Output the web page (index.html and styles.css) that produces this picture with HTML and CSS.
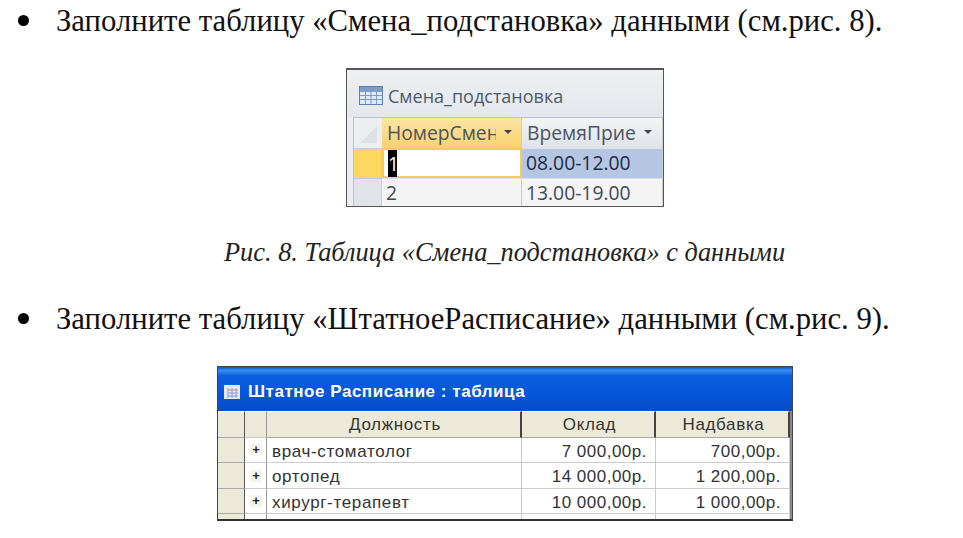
FILE: index.html
```html
<!DOCTYPE html>
<html lang="ru">
<head>
<meta charset="utf-8">
<title>Заполните таблицу</title>
<link rel="stylesheet" href="styles.css">
</head>
<body>
<main class="page">
  <div class="bullet-line bullet-first"><span class="dot"></span><p class="bullet-text">Заполните таблицу «Смена_подстановка» данными (см.рис. 8).</p></div>

  <figure class="shot-a">
    <div class="a-title">
      <svg class="a-icon" width="24" height="19" viewBox="0 0 24 19"><rect x="0.5" y="0.5" width="23" height="18" fill="#dfe8f5" stroke="#5f7ea8"/><rect x="1" y="1" width="22" height="4" fill="#7d9cc8"/><path d="M1 5.5H23M1 9.5H23M1 13.5H23M6.5 1V18M12 1V18M17.5 1V18" stroke="#7d9cc8" fill="none"/></svg>
      <span class="a-title-text">Смена_подстановка</span>
    </div>
    <div class="a-grid">
      <div class="a-corner"><svg width="26" height="28" viewBox="0 0 26 28"><path d="M6 25L23 8V25Z" fill="#dde1e6"/></svg></div>
      <div class="a-head a-head-active"><span class="a-head-label">НомерСмен</span><span class="a-caret"></span></div>
      <div class="a-head"><span class="a-head-label">ВремяПрие</span><span class="a-caret"></span></div>

      <div class="a-sel a-sel-active"></div>
      <div class="a-cell a-cell-edit"><span class="a-selected">1</span></div>
      <div class="a-cell a-cell-current">08.00-12.00</div>

      <div class="a-sel"></div>
      <div class="a-cell">2</div>
      <div class="a-cell">13.00-19.00</div>
    </div>
  </figure>

  <p class="caption">Рис. 8. Таблица «Смена_подстановка» с данными</p>

  <div class="bullet-line bullet-second"><span class="dot"></span><p class="bullet-text">Заполните таблицу «ШтатноеРасписание» данными (см.рис. 9).</p></div>

  <figure class="shot-b">
    <div class="b-title">
      <svg class="b-icon" width="16" height="14" viewBox="0 0 16 14"><rect width="16" height="14" fill="#e6e9f6"/><path d="M4 5H14M4 8H14M4 11H14M4 3V13M8 3V13M12 3V13" stroke="#8b9bd0" fill="none"/></svg>
      <span class="b-title-text">Штатное Расписание : таблица</span>
    </div>
    <div class="b-grid">
      <div class="b-sel b-hd"></div><div class="b-exp b-hd"></div><div class="b-hd b-center">Должность</div><div class="b-hd b-center">Оклад</div><div class="b-hd b-center">Надбавка</div>

      <div class="b-sel"></div><div class="b-exp"><span class="b-plus">+</span></div><div class="b-cell">врач-стоматолог</div><div class="b-cell b-num">7 000,00р.</div><div class="b-cell b-num">700,00р.</div>

      <div class="b-sel"></div><div class="b-exp"><span class="b-plus">+</span></div><div class="b-cell">ортопед</div><div class="b-cell b-num">14 000,00р.</div><div class="b-cell b-num">1 200,00р.</div>

      <div class="b-sel"></div><div class="b-exp"><span class="b-plus">+</span></div><div class="b-cell">хирург-терапевт</div><div class="b-cell b-num">10 000,00р.</div><div class="b-cell b-num">1 000,00р.</div>

      <div class="b-sel b-tail"></div><div class="b-exp b-tail"></div><div class="b-cell b-tail"></div><div class="b-cell b-tail"></div><div class="b-cell b-tail"></div>
    </div>
  </figure>
</main>
</body>
</html>
```

FILE: styles.css
```css
* { box-sizing: border-box; }
html, body { margin: 0; padding: 0; background: #fff; }
body { width: 963px; height: 538px; overflow: hidden; }
.page { display: flex; flex-direction: column; align-items: flex-start; }
figure { margin: 0; }
p { margin: 0; }

.bullet-line { display: flex; align-items: center; height: 46px; padding-left: 18px; }
.bullet-first { height: 42px; }
.bullet-second { margin-top: 27px; }
.dot { width: 11px; height: 11px; border-radius: 50%; background: #000; margin-right: 27px; margin-top: -1px; flex: none; }
.bullet-text { font: 30.7px/46px "Liberation Serif", serif; color: #111; white-space: nowrap; }

.shot-a {
  margin: 26px 0 0 346px; width: 318px; height: 139px;
  border: 1px solid #555; border-top-width: 2px; background: #e9edf1;
  font-family: "Open Sans", sans-serif; overflow: hidden;
  display: flex; flex-direction: column;
}
.a-title { height: 47px; display: flex; align-items: center; gap: 5px; padding: 4px 0 0 12px; background: linear-gradient(#eef0f3, #e3e7eb); flex: none; border-top-left-radius: 5px; }
.a-title-text { font-size: 18px; color: #4d5a68; }
.a-grid { display: grid; grid-template-columns: 28px 140px 1fr; grid-template-rows: 30px 30px 1fr; flex: 1; margin-left: 6px; border-top: 1px solid #b9c2cd; border-left: 1px solid #b9c2cd; }
.a-corner { background: #eceff2; }
.a-corner svg { display: block; }
.a-head { display: flex; align-items: center; padding: 0 0 2px 5px; background: linear-gradient(#f2f4f6, #dfe3e8); border-right: 1px solid #c5ccd5; font-size: 19.3px; color: #4a5563; overflow: hidden; }
.a-head-active { background: linear-gradient(#fbe4a4, #f8d26e); }
.a-head-label { white-space: nowrap; overflow: hidden; width: 109px; flex: none; }
.a-caret { width: 0; height: 0; margin-left: 8px; border-left: 4px solid transparent; border-right: 4px solid transparent; border-top: 4px solid #3d4650; flex: none; }
.a-sel { background: #e0e4e9; border-right: 1px solid #c5ccd5; border-top: 1px solid #c5ccd5; }
.a-sel-active { background: #fdd75f; }
.a-cell { display: flex; align-items: center; padding: 0 0 2px 4px; background: #f4f4f4; border-top: 1px solid #dcdfe3; border-right: 1px solid #c5ccd5; font-size: 19.3px; color: #3f4a57; }
.a-cell-edit { background: #fff; border: 2px solid #f5cd55; padding: 0 0 0 4px; }
.a-cell-current { background: #b4c6e1; color: #1f2c48; }
.a-selected { background: #000; color: #fff; line-height: 27px; width: 9px; }

.caption { margin: 30px 0 0 224px; font: italic 26.35px/32px "Liberation Serif", serif; color: #222; white-space: nowrap; }

.shot-b {
  margin: 24px 0 0 217px; width: 576px; height: 155px;
  border: 1px solid #444; border-bottom: 2px solid #333;
  font-family: "Liberation Sans", sans-serif; overflow: hidden; background: #fff;
  display: flex; flex-direction: column;
}
.b-title { height: 44px; display: flex; align-items: center; gap: 8px; padding: 6px 0 0 6px; background: linear-gradient(#0a58d4 0, #3a8cf0 8%, #0b5fe0 20%, #0553d6 70%, #0a4cc4 100%); flex: none; }
.b-title-text { font-size: 17px; font-weight: 700; color: #fff; white-space: nowrap; letter-spacing: 0.53px; }
.b-grid { display: grid; grid-template-columns: 27px 22px 255px 134px 1fr; grid-template-rows: 27px 25px 26px 25px 1fr; flex: 1; background: #fff; border-right: 2px solid #8a8a8a; }
.b-hd { background: #ece9d8; border-right: 2px solid #444; border-bottom: 1px solid #aca899; border-top: 1px solid #fff; padding-left: 3px; font-size: 17px; letter-spacing: 0.65px; color: #333; display: flex; align-items: center; }
.b-center { justify-content: center; }
.b-sel { background: #ece9d8; border-right: 1px solid #555; border-bottom: 1px solid #aaa; }
.b-exp { background: #fff; border-right: 1px solid #999; border-bottom: 1px solid #ccc; display: flex; align-items: center; justify-content: center; }
.b-exp.b-hd { background: #ece9d8; }
.b-plus { width: 12px; height: 12px; margin-left: 1px; background: #f6f4ea; font: 700 13px/11px "Liberation Sans", sans-serif; color: #222; text-align: center; }
.b-cell { display: flex; align-items: center; padding: 3px 0 0 5px; border-right: 1px solid #ccc; border-bottom: 1px solid #ccc; font-size: 17px; letter-spacing: 0.65px; color: #333; white-space: nowrap; overflow: hidden; }
.b-num { justify-content: flex-end; padding: 3px 8px 0 0; letter-spacing: 0.5px; }
.b-tail { border-bottom: 0; }
```
